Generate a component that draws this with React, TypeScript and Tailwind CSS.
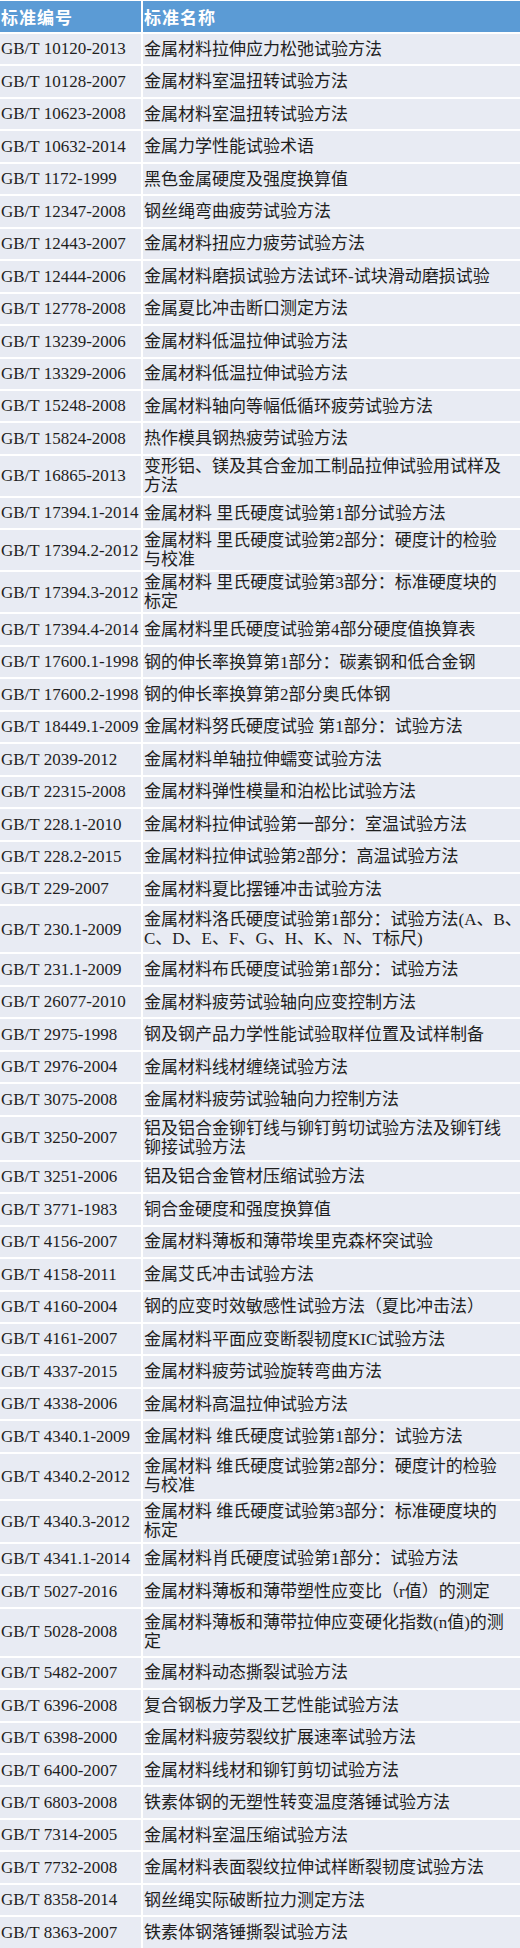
import React from "react";

type Row = { code: string; name: string[]; h?: string };

const rows: Row[] = [
  { code: "GB/T 10120-2013", name: ["金属材料拉伸应力松弛试验方法"] },
  { code: "GB/T 10128-2007", name: ["金属材料室温扭转试验方法"] },
  { code: "GB/T 10623-2008", name: ["金属材料室温扭转试验方法"] },
  { code: "GB/T 10632-2014", name: ["金属力学性能试验术语"] },
  { code: "GB/T 1172-1999", name: ["黑色金属硬度及强度换算值"] },
  { code: "GB/T 12347-2008", name: ["钢丝绳弯曲疲劳试验方法"] },
  { code: "GB/T 12443-2007", name: ["金属材料扭应力疲劳试验方法"] },
  { code: "GB/T 12444-2006", name: ["金属材料磨损试验方法试环-试块滑动磨损试验"] },
  { code: "GB/T 12778-2008", name: ["金属夏比冲击断口测定方法"] },
  { code: "GB/T 13239-2006", name: ["金属材料低温拉伸试验方法"] },
  { code: "GB/T 13329-2006", name: ["金属材料低温拉伸试验方法"] },
  { code: "GB/T 15248-2008", name: ["金属材料轴向等幅低循环疲劳试验方法"] },
  { code: "GB/T 15824-2008", name: ["热作模具钢热疲劳试验方法"] },
  { code: "GB/T 16865-2013", name: ["变形铝、镁及其合金加工制品拉伸试验用试样及", "方法"], h: "h-[42px]" },
  { code: "GB/T 17394.1-2014", name: ["金属材料 里氏硬度试验第1部分试验方法"] },
  { code: "GB/T 17394.2-2012", name: ["金属材料 里氏硬度试验第2部分：硬度计的检验", "与校准"], h: "h-[42px]" },
  { code: "GB/T 17394.3-2012", name: ["金属材料 里氏硬度试验第3部分：标准硬度块的", "标定"], h: "h-[42px]" },
  { code: "GB/T 17394.4-2014", name: ["金属材料里氏硬度试验第4部分硬度值换算表"] },
  { code: "GB/T 17600.1-1998", name: ["钢的伸长率换算第1部分：碳素钢和低合金钢"] },
  { code: "GB/T 17600.2-1998", name: ["钢的伸长率换算第2部分奥氏体钢"] },
  { code: "GB/T 18449.1-2009", name: ["金属材料努氏硬度试验 第1部分：试验方法"] },
  { code: "GB/T 2039-2012", name: ["金属材料单轴拉伸蠕变试验方法"] },
  { code: "GB/T 22315-2008", name: ["金属材料弹性模量和泊松比试验方法"] },
  { code: "GB/T 228.1-2010", name: ["金属材料拉伸试验第一部分：室温试验方法"] },
  { code: "GB/T 228.2-2015", name: ["金属材料拉伸试验第2部分：高温试验方法"] },
  { code: "GB/T 229-2007", name: ["金属材料夏比摆锤冲击试验方法"] },
  { code: "GB/T 230.1-2009", name: ["金属材料洛氏硬度试验第1部分：试验方法(A、B、", "C、D、E、F、G、H、K、N、T标尺)"], h: "h-[48px]" },
  { code: "GB/T 231.1-2009", name: ["金属材料布氏硬度试验第1部分：试验方法"] },
  { code: "GB/T 26077-2010", name: ["金属材料疲劳试验轴向应变控制方法"] },
  { code: "GB/T 2975-1998", name: ["钢及钢产品力学性能试验取样位置及试样制备"] },
  { code: "GB/T 2976-2004", name: ["金属材料线材缠绕试验方法"] },
  { code: "GB/T 3075-2008", name: ["金属材料疲劳试验轴向力控制方法"] },
  { code: "GB/T 3250-2007", name: ["铝及铝合金铆钉线与铆钉剪切试验方法及铆钉线", "铆接试验方法"], h: "h-[45px]" },
  { code: "GB/T 3251-2006", name: ["铝及铝合金管材压缩试验方法"] },
  { code: "GB/T 3771-1983", name: ["铜合金硬度和强度换算值"] },
  { code: "GB/T 4156-2007", name: ["金属材料薄板和薄带埃里克森杯突试验"] },
  { code: "GB/T 4158-2011", name: ["金属艾氏冲击试验方法"] },
  { code: "GB/T 4160-2004", name: ["钢的应变时效敏感性试验方法（夏比冲击法）"] },
  { code: "GB/T 4161-2007", name: ["金属材料平面应变断裂韧度KIC试验方法"] },
  { code: "GB/T 4337-2015", name: ["金属材料疲劳试验旋转弯曲方法"] },
  { code: "GB/T 4338-2006", name: ["金属材料高温拉伸试验方法"] },
  { code: "GB/T 4340.1-2009", name: ["金属材料 维氏硬度试验第1部分：试验方法"] },
  { code: "GB/T 4340.2-2012", name: ["金属材料 维氏硬度试验第2部分：硬度计的检验", "与校准"], h: "h-[47px]" },
  { code: "GB/T 4340.3-2012", name: ["金属材料 维氏硬度试验第3部分：标准硬度块的", "标定"], h: "h-[43px]" },
  { code: "GB/T 4341.1-2014", name: ["金属材料肖氏硬度试验第1部分：试验方法"] },
  { code: "GB/T 5027-2016", name: ["金属材料薄板和薄带塑性应变比（r值）的测定"] },
  { code: "GB/T 5028-2008", name: ["金属材料薄板和薄带拉伸应变硬化指数(n值)的测", "定"], h: "h-[49px]" },
  { code: "GB/T 5482-2007", name: ["金属材料动态撕裂试验方法"] },
  { code: "GB/T 6396-2008", name: ["复合钢板力学及工艺性能试验方法"] },
  { code: "GB/T 6398-2000", name: ["金属材料疲劳裂纹扩展速率试验方法"] },
  { code: "GB/T 6400-2007", name: ["金属材料线材和铆钉剪切试验方法"] },
  { code: "GB/T 6803-2008", name: ["铁素体钢的无塑性转变温度落锤试验方法"] },
  { code: "GB/T 7314-2005", name: ["金属材料室温压缩试验方法"] },
  { code: "GB/T 7732-2008", name: ["金属材料表面裂纹拉伸试样断裂韧度试验方法"] },
  { code: "GB/T 8358-2014", name: ["钢丝绳实际破断拉力测定方法"] },
  { code: "GB/T 8363-2007", name: ["铁素体钢落锤撕裂试验方法"] },
];

export default function App() {
  return (
    <div className="w-[520px] h-[1948px] bg-white overflow-hidden font-[family-name:'Liberation_Serif','Noto_Sans_CJK_SC',serif] text-[17px] text-[#1e1e1e]">
      <div className="flex h-[32px] bg-[#5b9bd5] border-t border-white font-[family-name:'Noto_Sans_CJK_SC',sans-serif] font-bold text-white text-[17px] tracking-[1px]">
        <div className="w-[143px] shrink-0 flex items-center pl-[1px] border-r-2 border-white">标准编号</div>
        <div className="flex-1 flex items-center pl-[1px]">标准名称</div>
      </div>
      {rows.map((r, i) => (
        <div
          key={i}
          className={`flex bg-[#e8ebf3] border-t-2 border-white ${r.h ?? "h-[32.46px]"}`}
        >
          <div className="w-[143px] shrink-0 flex items-center pl-[1px] border-r-2 border-white whitespace-nowrap">
            {r.code}
          </div>
          <div className="flex-1 flex flex-col justify-center pl-[1px] whitespace-nowrap leading-[19px]">
            {r.name.map((line, j) => (
              <div key={j}>{line}</div>
            ))}
          </div>
        </div>
      ))}
    </div>
  );
}
